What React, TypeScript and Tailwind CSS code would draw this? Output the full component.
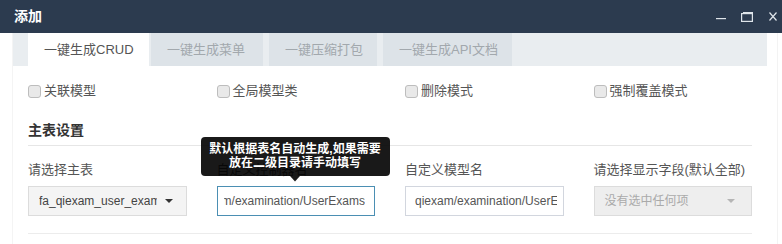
import { ReactNode } from 'react'

const font = "font-['Liberation_Sans','Noto_Sans_CJK_SC',sans-serif]"

function Checkbox({ label }: { label: string }) {
  return (
    <label className="flex items-center h-[20px] text-[13px] text-[#555]">
      <span className="w-[13px] h-[13px] rounded-[3px] border border-[#bdbdbd] bg-[#e9e9e9] mr-[3px] shrink-0" />
      {label}
    </label>
  )
}

function Caret({ color = '#333' }: { color?: string }) {
  return (
    <svg width="8" height="4" viewBox="0 0 8 4" className="shrink-0">
      <path d="M0 0 L8 0 L4 4 Z" fill={color} />
    </svg>
  )
}

function Field({ label, children }: { label: string; children: ReactNode }) {
  return (
    <div className="relative">
      <div className="h-[20px] leading-[20px] text-[13px] text-[#555] whitespace-nowrap">{label}</div>
      <div className="mt-[6px] h-[30px]">{children}</div>
    </div>
  )
}

const tabs = [
  { text: '一键生成CRUD', w: 'w-[121px]', active: true, ml: 'ml-0' },
  { text: '一键生成菜单', w: 'w-[112px]', active: false, ml: 'ml-[2px]' },
  { text: '一键压缩打包', w: 'w-[108px]', active: false, ml: 'ml-[6px]' },
  { text: '一键生成API文档', w: 'w-[129px]', active: false, ml: 'ml-[6px]' },
]

export default function App() {
  return (
    <div className={`w-[782px] h-[244px] overflow-hidden bg-white ${font}`}>
      {/* title bar */}
      <div className="h-[33px] bg-[#2c3b4f] flex items-center justify-between pl-[14px] pr-[5px]">
        <span className="text-white text-[14px] font-bold">添加</span>
        <div className="flex items-center">
          <svg width="10" height="2" viewBox="0 0 10 2" className="mt-[4px]">
            <rect x="0" y="0" width="10" height="1.2" fill="#dfe5ea" />
          </svg>
          <svg width="12" height="10" viewBox="0 0 12 10" className="ml-[15px]">
            <rect x="0.6" y="1.6" width="10.8" height="7.8" fill="none" stroke="#dfe5ea" strokeWidth="1.2" />
            <rect x="2" y="0" width="10" height="1" fill="#dfe5ea" />
          </svg>
          <svg width="8" height="9" viewBox="0 0 8 9" className="ml-[16px]">
            <path d="M0.5 0.5 L7.5 8.5 M7.5 0.5 L0.5 8.5" stroke="#dfe5ea" strokeWidth="1.2" />
          </svg>
        </div>
      </div>

      <div className="w-[778px] pl-[12px] border-r border-[#f3f3f3] h-[211px]">
        <div className="w-[755px] border-l border-[#f4f4f4] h-full">
          {/* tabs */}
          <div className="h-[33px] bg-[#e9edf0] flex pl-[15px]">
            {tabs.map((t) => (
              <div
                key={t.text}
                className={`${t.w} ${t.ml} h-full flex items-center px-[16px] text-[13px] whitespace-nowrap ${
                  t.active ? 'bg-white text-[#555]' : 'bg-[#dde3e8] text-[#a2a8ad]'
                }`}
              >
                {t.text}
              </div>
            ))}
          </div>

          <div className="px-[15px]">
            <div className="mt-[15px] grid grid-cols-4 gap-x-[30px]">
              <Checkbox label="关联模型" />
              <Checkbox label="全局模型类" />
              <Checkbox label="删除模式" />
              <Checkbox label="强制覆盖模式" />
            </div>

            <div className="mt-[19px] h-[20px] leading-[20px] text-[14px] font-bold text-[#333]">主表设置</div>
            <div className="mt-[5px] border-t border-[#e6e6e6]" />

            <div className="mt-[14px] grid grid-cols-4 gap-x-[30px]">
              <Field label="请选择主表">
                <div className="h-full flex items-center bg-[#f4f4f4] border border-[#dcdcdc] pl-[10px] text-[12px] text-[#444]">
                  <span className="overflow-hidden whitespace-nowrap w-[118px]">fa_qiexam_user_exams</span>
                  <span className="ml-[8px]">
                    <Caret />
                  </span>
                </div>
              </Field>

              <Field label="自定义控制器名">
                <div className="h-full flex items-center border border-[#4b8fb3] pl-[6px] pr-[9px] text-[12px] text-[#555]">
                  <div className="flex-1 flex justify-end overflow-hidden whitespace-nowrap">
                    <span>qiexam/examination/UserEx</span>
                    <span className="w-px h-[14px] bg-[#222] self-center" />
                    <span>ams</span>
                  </div>
                </div>
                <div className="absolute left-[-16px] top-[-23px] w-[189px] rounded-[4px] bg-black/90 pt-[5px] pb-[6px] text-center text-[12px] leading-[14px] font-bold text-white">
                  默认根据表名自动生成,如果需要
                  <br />
                  放在二级目录请手动填写
                  <svg width="10" height="6" viewBox="0 0 10 6" className="absolute left-[89px] bottom-[-6px]">
                    <path d="M0 0 L10 0 L5 5.5 Z" fill="rgba(0,0,0,0.9)" />
                  </svg>
                </div>
              </Field>

              <Field label="自定义模型名">
                <div className="h-full flex items-center border border-[#d2d6de] pl-[9px] pr-[6px] text-[12px] text-[#555]">
                  <div className="flex-1 overflow-hidden whitespace-nowrap">qiexam/examination/UserExams</div>
                </div>
              </Field>

              <Field label="请选择显示字段(默认全部)">
                <div className="h-full flex items-center justify-between bg-[#eeeeee] border border-[#dcdcdc] pl-[10px] pr-[16px] text-[12px] text-[#aaa]">
                  <span>没有选中任何项</span>
                  <Caret color="#b5b5b5" />
                </div>
              </Field>
            </div>

            <div className="mt-[17px] border-t border-[#ececec]" />
          </div>
        </div>
      </div>
    </div>
  )
}
